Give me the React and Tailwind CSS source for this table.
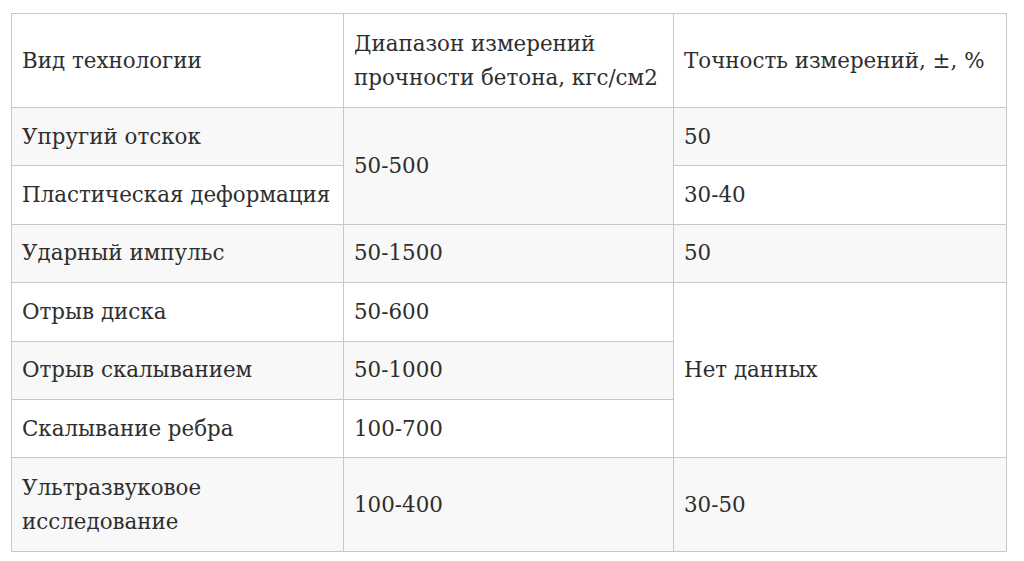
import React from "react";

const base = "border border-[#c8c8c8] px-[10px] align-middle text-left font-normal";
const cell = base + " py-[11.7px]";
const tall = base + " py-[12.5px]";

export default function App() {
  return (
    <div className="w-[1024px] h-[561px] bg-white pt-[13px] pl-[11px]" style={{ fontFamily: '"DejaVu Serif", "Liberation Serif", serif' }}>
      <table className="w-[995px] border-collapse table-fixed text-[21.4px] leading-[34px] text-[#2e2e2e]">
        <colgroup>
          <col className="w-[332px]" />
          <col className="w-[330px]" />
          <col className="w-[333px]" />
        </colgroup>
        <thead>
          <tr className="bg-white">
            <th className={tall}>Вид технологии</th>
            <th className={tall}>Диапазон измерений прочности бетона, кгс/см2</th>
            <th className={tall}>Точность измерений, ±, %</th>
          </tr>
        </thead>
        <tbody>
          <tr className="bg-[#f8f8f8]">
            <td className={cell}>Упругий отскок</td>
            <td className={cell} rowSpan={2}>50-500</td>
            <td className={cell}>50</td>
          </tr>
          <tr className="bg-white">
            <td className={cell}>Пластическая деформация</td>
            <td className={cell}>30-40</td>
          </tr>
          <tr className="bg-[#f8f8f8]">
            <td className={cell}>Ударный импульс</td>
            <td className={cell}>50-1500</td>
            <td className={cell}>50</td>
          </tr>
          <tr className="bg-white">
            <td className={cell}>Отрыв диска</td>
            <td className={cell}>50-600</td>
            <td className={cell} rowSpan={3}>Нет данных</td>
          </tr>
          <tr className="bg-[#f8f8f8]">
            <td className={cell}>Отрыв скалыванием</td>
            <td className={cell}>50-1000</td>
          </tr>
          <tr className="bg-white">
            <td className={cell}>Скалывание ребра</td>
            <td className={cell}>100-700</td>
          </tr>
          <tr className="bg-[#f8f8f8]">
            <td className={tall}>Ультразвуковое исследование</td>
            <td className={tall}>100-400</td>
            <td className={tall}>30-50</td>
          </tr>
        </tbody>
      </table>
    </div>
  );
}
